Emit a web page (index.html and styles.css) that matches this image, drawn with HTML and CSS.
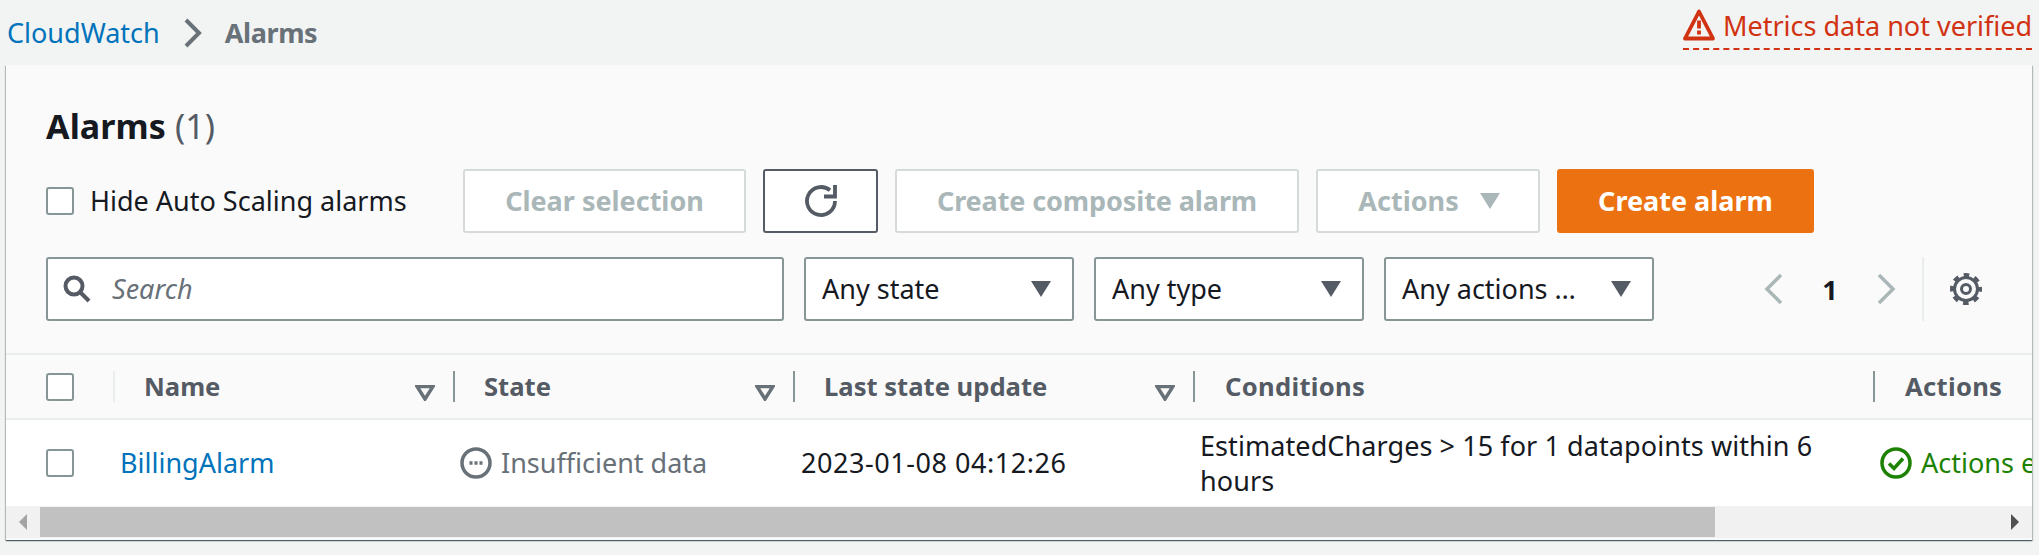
FILE: index.html
```html
<!DOCTYPE html>
<html lang="en">
<head>
<meta charset="utf-8">
<title>CloudWatch Alarms</title>
<link rel="stylesheet" href="styles.css">
</head>
<body>
<header class="topbar">
  <nav class="crumbs">
    <a class="crumb-link">CloudWatch</a>
    <svg class="crumb-sep" viewBox="0 0 18 30"><path d="M2 2l13 13L2 28"/></svg>
    <span class="crumb-current">Alarms</span>
  </nav>
  <div class="warning">
    <svg class="warning-icon" viewBox="0 0 32 33"><path class="warning-tri" d="M16 3.500L2 30.500h28z"/><path class="warning-mark" d="M16 12.500v8M16 22.500v4"/></svg>
    <span>Metrics data not verified</span>
  </div>
</header>
<main class="card">
  <section class="card-head">
    <h1 class="title">Alarms <span class="count">(1)</span></h1>
    <div class="toolbar">
      <label class="hide-toggle"><span class="box"></span>Hide Auto Scaling alarms</label>
      <div class="buttons">
        <button class="btn btn-clear" disabled>Clear selection</button>
        <button class="btn btn-refresh"><svg class="refresh-icon" viewBox="0 0 32 32"><path d="M30 16A14 14 0 1 1 25 5.300"/><path d="M30 0v11.500H19"/></svg></button>
        <button class="btn btn-composite" disabled>Create composite alarm</button>
        <button class="btn btn-actions" disabled>Actions<svg class="caret caret-off" viewBox="0 0 20 16"><path d="M0 0h20L10 16z"/></svg></button>
        <button class="btn btn-primary">Create alarm</button>
      </div>
    </div>
    <div class="filters">
      <div class="search">
        <svg class="search-icon" viewBox="0 0 28 28"><circle cx="11" cy="11" r="8.500"/><path d="M17 17l9 9"/></svg>
        <span>Search</span>
      </div>
      <div class="select"><span>Any state</span><svg class="caret" viewBox="0 0 20 16"><path d="M0 0h20L10 16z"/></svg></div>
      <div class="select"><span>Any type</span><svg class="caret" viewBox="0 0 20 16"><path d="M0 0h20L10 16z"/></svg></div>
      <div class="select"><span>Any actions …</span><svg class="caret" viewBox="0 0 20 16"><path d="M0 0h20L10 16z"/></svg></div>
      <div class="pager">
        <svg class="page-arrow" viewBox="0 0 20 32"><path d="M17 2L3 16l14 14"/></svg>
        <span class="page-num">1</span>
        <svg class="page-arrow" viewBox="0 0 20 32"><path d="M3 2l14 14L3 30"/></svg>
      </div>
      <div class="settings">
        <svg class="gear" viewBox="0 0 32 32"><circle class="gear-teeth" cx="16" cy="16" r="14"/><circle class="gear-body" cx="16" cy="16" r="11.500"/><circle class="gear-hub" cx="16" cy="16" r="4.500"/></svg>
      </div>
    </div>
  </section>
  <div class="table">
    <div class="row row-head">
      <div class="cell cell-check"><span class="box"></span></div>
      <div class="cell cell-name"><span class="head-label">Name</span><svg class="sort" viewBox="0 0 20 16"><path d="M2 1.500h16L10 14z"/></svg></div>
      <div class="cell cell-state"><span class="head-label">State</span><svg class="sort" viewBox="0 0 20 16"><path d="M2 1.500h16L10 14z"/></svg></div>
      <div class="cell cell-update"><span class="head-label">Last state update</span><svg class="sort" viewBox="0 0 20 16"><path d="M2 1.500h16L10 14z"/></svg></div>
      <div class="cell cell-cond"><span class="head-label head-wide">Conditions</span></div>
      <div class="cell cell-acts"><span class="head-label head-wide">Actions</span></div>
    </div>
    <div class="row row-body">
      <div class="cell cell-check"><span class="box"></span></div>
      <div class="cell cell-name"><a class="alarm-link">BillingAlarm</a></div>
      <div class="cell cell-state status-muted">
        <svg class="status-icon" viewBox="0 0 32 32"><circle cx="16" cy="16" r="14"/><path class="dots" d="M9.500 16h13"/></svg>Insufficient data
      </div>
      <div class="cell cell-update">2023-01-08 04:12:26</div>
      <div class="cell cell-cond">EstimatedCharges &gt; 15 for 1 datapoints within 6 hours</div>
      <div class="cell cell-acts status-ok">
        <svg class="status-icon" viewBox="0 0 32 32"><circle cx="16" cy="16" r="14"/><path d="M9 16.500l5 5 9-10"/></svg><span class="nowrap">Actions enabled</span>
      </div>
    </div>
  </div>
  <div class="scrollbar">
    <span class="arrow arrow-left"></span>
    <span class="thumb"></span>
    <span class="arrow arrow-right"></span>
  </div>
</main>
</body>
</html>
```
FILE: styles.css
```css
* { box-sizing: border-box; }
html, body { margin: 0; height: 100%; overflow: hidden; }
body {
  background: #f2f3f3;
  color: #16191f;
  font-family: "Noto Sans", "Open Sans", sans-serif;
  font-size: 27px;
  line-height: 35px;
}
svg { display: block; flex: none; }

.topbar { height: 65px; display: flex; justify-content: space-between; padding: 0 7px; }
.crumbs { display: flex; align-items: center; height: 65px; }
.crumb-link { color: #0073bb; }
.crumb-sep { width: 18px; height: 30px; margin: 0 23px 0 24px; fill: none; stroke: #687078; stroke-width: 4; }
.crumb-current { color: #687078; font-weight: 700; letter-spacing: -.4px; }
.warning {
  height: 50px; width: 349px; display: flex; align-items: flex-start; gap: 8px; white-space: nowrap;
  color: #d13212; border-bottom: 2px dashed #d13212; padding-top: 8px;
}
.warning-icon { width: 32px; height: 33px; }
.warning-tri { fill: none; stroke: #d13212; stroke-width: 3.800; stroke-linejoin: round; }
.warning-mark { fill: none; stroke: #d13212; stroke-width: 3.800; stroke-dasharray: 8 2 4; }

.card {
  margin-left: 6px; width: 2026px; height: 475px;
  background: #fafafa;
  box-shadow: 0 1px 1px 0 rgba(0,28,36,.5), 1px 1px 1px 0 rgba(0,28,36,.2), -1px 1px 1px 0 rgba(0,28,36,.2);
  display: flex; flex-direction: column;
}
.card-head { height: 288px; padding: 39px 0 0 40px; }
.title { margin: 0; font-size: 34px; line-height: 44px; font-weight: 700; height: 65px; letter-spacing: .1px; }
.count { font-weight: 400; color: #545b64; }

.toolbar { display: flex; height: 64px; align-items: center; }
.hide-toggle { width: 417px; display: flex; align-items: center; gap: 16px; padding-bottom: 2px; }
.hide-toggle .box { margin-top: 2px; }
.box {
  display: block; flex: none; width: 28px; height: 28px; background: #fff;
  border: 2px solid #879596; border-radius: 3px;
}
.buttons { display: flex; gap: 17px; }
.btn {
  height: 64px; padding: 0 0 2px; background: #fff; border: 2px solid #545b64; border-radius: 3px;
  font: 700 27px/1 "Noto Sans", sans-serif; display: flex; align-items: center; justify-content: center;
}
.btn svg { margin-top: 2px; }
.btn[disabled] { border-color: #d5dbdb; color: #aab7b8; }
.btn-clear { width: 283px; }
.btn-refresh { width: 115px; }
.btn-composite { width: 404px; letter-spacing: -.1px; }
.btn-actions { width: 224px; gap: 21px; padding-left: 2px; }
.btn-primary { width: 257px; background: #ec7211; border-color: #ec7211; color: #fff; }
.refresh-icon { width: 32px; height: 32px; fill: none; stroke: #545b64; stroke-width: 3.800; }
.caret { width: 20px; height: 16px; fill: #545b64; }
.caret-off { fill: #aab7b8; }

.filters { display: flex; height: 64px; margin-top: 24px; align-items: center; }
.search, .select {
  height: 64px; background: #fff; border: 2px solid #879596; border-radius: 3px;
  display: flex; align-items: center;
}
.search span, .select span { padding-bottom: 2px; }
.search { width: 738px; padding-left: 15px; gap: 21px; color: #687078; font-style: italic; }
.search-icon { width: 28px; height: 28px; fill: none; stroke: #545b64; stroke-width: 4; }
.select { width: 270px; margin-left: 20px; padding: 0 21px 0 16px; justify-content: space-between; }
.pager { display: flex; align-items: center; margin-left: 110px; }
.page-arrow { width: 20px; height: 32px; fill: none; stroke: #aab7b8; stroke-width: 3.500; }
.page-num { width: 92px; text-align: center; font-weight: 700; }
.settings { height: 64px; margin-left: 26px; padding-left: 26px; border-left: 2px solid #eaeded; display: flex; align-items: center; }
.gear { width: 32px; height: 32px; fill: none; stroke: #545b64; }
.gear-teeth { stroke-width: 4; stroke-dasharray: 5.500 5.500; stroke-dashoffset: 2.750; }
.gear-body { stroke-width: 3; }
.gear-hub { stroke-width: 3; }

.table { border-top: 2px solid #eaeded; flex: 1; overflow: hidden; }
.row { display: grid; grid-template-columns: 107px 340px 340px 400px 680px 159px; align-items: center; }
.row-head { height: 65px; background: #fafafa; border-bottom: 2px solid #eaeded; }
.row-body { height: 86px; background: #fff; }
.cell { display: flex; align-items: center; min-width: 0; }
.cell-check { padding-left: 40px; }
.head-label { font-size: 25.600px; font-weight: 700; color: #545b64; }
.head-wide { letter-spacing: .3px; }
.row-head .cell { height: 31px; border-left: 2px solid #879596; padding-left: 29px; justify-content: space-between; padding-right: 18px; }
.row-head .cell-cond, .row-head .cell-acts { padding-left: 30px; }
.row-head .cell-check { border-left: 0; padding: 0 0 0 40px; height: 28px; }
.row-head .cell-name { border-left-color: #eaeded; }
.sort { width: 20px; height: 16px; margin-top: 12px; fill: none; stroke: #687078; stroke-width: 3.500; }
.alarm-link { color: #0073bb; }
.row-body .cell { padding-bottom: 2px; }
.row-body .box, .row-body .status-icon { margin-top: 2px; }
.row-body .cell-name { padding-left: 7px; }
.row-body .cell-state { padding-left: 7px; }
.row-body .cell-update { padding-left: 8px; letter-spacing: .55px; }
.row-body .cell-cond { padding: 0 40px 1px 7px; letter-spacing: .08px; }
.row-body .cell-acts { padding-left: 7px; white-space: nowrap; }
.status-icon { width: 32px; height: 32px; margin-right: 9px; fill: none; stroke-width: 3.500; }
.status-muted { color: #687078; }
.status-muted .status-icon { stroke: #687078; }
.status-muted .dots { stroke-width: 3.500; stroke-dasharray: 3 2; }
.status-ok { color: #1d8102; }
.status-ok .status-icon { stroke: #1d8102; }
.nowrap { white-space: nowrap; }

.scrollbar { height: 32px; flex: none; background: #f1f1f1; display: flex; align-items: center; padding: 2px 0; margin-bottom: 2px; }
.arrow { width: 0; height: 0; border-style: solid; flex: none; }
.arrow-left { border-width: 8px 8px 8px 0; border-color: transparent #a3a3a3 transparent transparent; margin: 0 13px 0 13px; }
.thumb { width: 1675px; height: 30px; background: #c1c1c1; flex: none; }
.arrow-right { border-width: 8px 0 8px 8px; border-color: transparent transparent transparent #505050; margin-left: 296px; }
```
